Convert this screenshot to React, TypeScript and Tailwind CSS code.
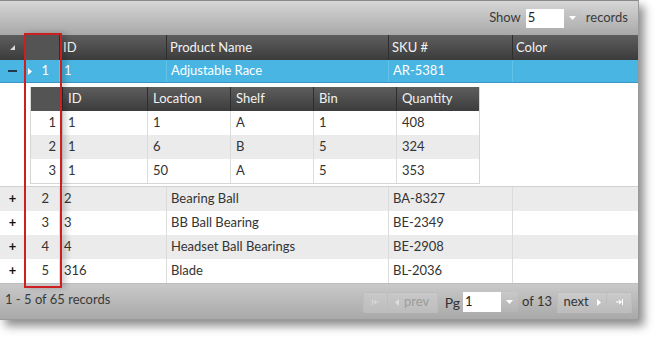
const font = { fontFamily: "Lato, 'Open Sans', sans-serif" };

const mainCols = ["w-[25px]", "w-[35px]", "w-[107px]", "w-[222px]", "w-[124px]", "flex-1"];
const childCols = ["w-[32px]", "w-[85px]", "w-[83px]", "w-[83px]", "w-[83px]", "flex-1"];

const rows = [
  { n: 2, id: "2", name: "Bearing Ball", sku: "BA-8327" },
  { n: 3, id: "3", name: "BB Ball Bearing", sku: "BE-2349" },
  { n: 4, id: "4", name: "Headset Ball Bearings", sku: "BE-2908" },
  { n: 5, id: "316", name: "Blade", sku: "BL-2036" },
];

const childRows = [
  ["1", "1", "1", "A", "1", "408"],
  ["2", "1", "6", "B", "5", "324"],
  ["3", "1", "50", "A", "5", "353"],
];

function Caret({ className = "" }: { className?: string }) {
  return (
    <svg width="7" height="4" viewBox="0 0 7 4" className={className}>
      <path d="M0 0h7L3.5 4z" fill="currentColor" />
    </svg>
  );
}

function Tri({ dir, className = "" }: { dir: "r" | "l"; className?: string }) {
  return (
    <svg width="4" height="7" viewBox="0 0 4 7" className={className}>
      <path d={dir === "r" ? "M0 0l4 3.5L0 7z" : "M4 0L0 3.5 4 7z"} fill="currentColor" />
    </svg>
  );
}

export default function App() {
  return (
    <div className="relative h-[341px] w-[660px] bg-white text-[13px]" style={font}>
      <div className="w-[639px] overflow-hidden border-r border-b border-[#9a9a9a] shadow-[5px_6px_9px_rgba(0,0,0,0.45)]">
        {/* toolbar */}
        <div className="flex h-[35px] items-center justify-end gap-[5px] border-t border-[#8a8a8a] bg-gradient-to-b from-[#d6d6d6] to-[#a9a9a9] pr-[10px] text-[#3a3a3a]">
          <span>Show</span>
          <div className="flex h-[19px] items-stretch">
            <div className="flex w-[38px] items-center bg-white pl-[2px] text-[#222]">5</div>
            <div className="flex w-[17px] items-center justify-center bg-gradient-to-b from-[#c8c8c8] to-[#b4b4b4] text-white">
              <Caret />
            </div>
          </div>
          <span>records</span>
        </div>

        {/* header */}
        <div className="flex h-[25px] bg-gradient-to-b from-[#5e5e5e] to-[#3c3c3c] text-[#f2f2f2]">
          <div className={`${mainCols[0]} flex items-center justify-center`}>
            <svg width="5" height="5" viewBox="0 0 5 5">
              <path d="M5 0v5H0z" fill="#d8d8d8" />
            </svg>
          </div>
          <div className={`${mainCols[1]} border-r border-[#2e2e2e] bg-[#545454]`} />
          {["ID", "Product Name", "SKU #", "Color"].map((h, i) => (
            <div
              key={h}
              className={`${mainCols[i + 2]} flex items-center border-r border-[#2e2e2e] pl-[3px] ${i === 3 ? "border-r-0" : ""}`}
            >
              {h}
            </div>
          ))}
        </div>

        {/* selected row */}
        <div className="flex h-[23px] border-b border-[#3a95c0] bg-[#49b5e2] text-white">
          <div className={`${mainCols[0]} flex items-center justify-center`}>
            <div className="h-[2px] w-[9px] bg-[#1f3a4a]" />
          </div>
          <div className={`${mainCols[1]} flex items-center justify-end gap-[9px] border-r border-[#63c2ea] pr-[10px]`}>
            <Tri dir="r" />
            <span>1</span>
          </div>
          {["1", "Adjustable Race", "AR-5381", ""].map((c, i) => (
            <div key={i} className={`${mainCols[i + 2]} flex items-center border-r border-[#63c2ea] pl-[4px] ${i === 3 ? "border-r-0" : ""}`}>
              {c}
            </div>
          ))}
        </div>

        {/* child grid area */}
        <div className="h-[104px] border-b border-[#d0d0d0] bg-white pt-[4px] pl-[30px]">
          <div className="w-[450px] border-x border-b border-[#d6d6d6]">
            <div className="flex h-[24px] bg-gradient-to-b from-[#5e5e5e] to-[#3c3c3c] text-[#f2f2f2]">
              <div className={`${childCols[0]} border-r border-[#2e2e2e] bg-[#545454]`} />
              {["ID", "Location", "Shelf", "Bin", "Quantity"].map((h, i) => (
                <div key={h} className={`${childCols[i + 1]} flex items-center border-r border-[#2e2e2e] pl-[5px] ${i === 4 ? "border-r-0" : ""}`}>
                  {h}
                </div>
              ))}
            </div>
            {childRows.map((r, ri) => (
              <div key={ri} className={`flex h-[24px] text-[#333] ${ri % 2 ? "bg-[#ebebeb]" : "bg-white"}`}>
                <div className={`${childCols[0]} flex items-center justify-end border-r border-[#dcdcdc] pr-[6px]`}>{r[0]}</div>
                {r.slice(1).map((c, ci) => (
                  <div key={ci} className={`${childCols[ci + 1]} flex items-center border-r border-[#dcdcdc] pl-[5px] ${ci === 4 ? "border-r-0" : ""}`}>
                    {c}
                  </div>
                ))}
              </div>
            ))}
          </div>
        </div>

        {/* body rows */}
        {rows.map((r, ri) => (
          <div key={r.n} className={`flex h-[24px] text-[#333] ${ri % 2 ? "bg-white" : "bg-[#ebebeb]"}`}>
            <div className={`${mainCols[0]} flex items-center justify-center font-bold text-[#111]`}>+</div>
            <div className={`${mainCols[1]} flex items-center justify-end border-r border-[#dcdcdc] pr-[10px]`}>{r.n}</div>
            {[r.id, r.name, r.sku, ""].map((c, i) => (
              <div key={i} className={`${mainCols[i + 2]} flex items-center border-r border-[#dcdcdc] pl-[4px] ${i === 3 ? "border-r-0" : ""}`}>
                {c}
              </div>
            ))}
          </div>
        ))}

        {/* footer */}
        <div className="flex h-[36px] items-center justify-between border-t border-[#bdbdbd] bg-gradient-to-b from-[#c9c9c9] to-[#a9a9a9] pl-[5px] pr-[6px] text-[#3a3a3a]">
          <span className="-mt-[3px]">1 - 5 of 65 records</span>
          <div className="mt-[1px] flex items-center">
            <div className="flex h-[21px] w-[25px] items-center justify-center rounded-l-[2px] border border-[#bdbdbd] bg-gradient-to-b from-[#c8c8c8] to-[#bdbdbd] text-[#d6d6d6]">
              <svg width="7" height="6" viewBox="0 0 7 6"><path d="M0.5 0v6" stroke="currentColor" /><path d="M1 3l3-2.5v5z M3.5 2.6h3.5v0.8H3.5z" fill="currentColor" /></svg>
            </div>
            <div className="flex h-[21px] w-[50px] items-center justify-center gap-[5px] border border-l-0 border-[#bdbdbd] bg-gradient-to-b from-[#c8c8c8] to-[#bdbdbd] text-[#9c9c9c]">
              <Tri dir="l" className="text-[#dedede]" />
              <span>prev</span>
            </div>
            <span className="ml-[7px] mr-[3px] text-[14px] text-[#333]">Pg</span>
            <div className="flex h-[20px] items-stretch">
              <div className="flex w-[38px] items-center bg-white pl-[2px] text-[#222]">1</div>
              <div className="flex w-[17px] items-center justify-center bg-gradient-to-b from-[#c8c8c8] to-[#b4b4b4] text-white">
                <Caret />
              </div>
            </div>
            <span className="ml-[4px] mr-[5px] text-[#333]">of 13</span>
            <div className="flex h-[21px] w-[50px] items-center justify-center gap-[8px] border border-[#bdbdbd] bg-gradient-to-b from-[#cbcbcb] to-[#bcbcbc] text-[#333]">
              <span>next</span>
              <Tri dir="r" className="text-white" />
            </div>
            <div className="flex h-[21px] w-[25px] items-center justify-center rounded-r-[2px] border border-l-0 border-[#bdbdbd] bg-gradient-to-b from-[#cbcbcb] to-[#bcbcbc] text-white">
              <svg width="7" height="6" viewBox="0 0 7 6"><path d="M6.5 0v6" stroke="currentColor" /><path d="M6 3L3 0.5v5z M0 2.6h3.5v0.8H0z" fill="currentColor" /></svg>
            </div>
          </div>
        </div>
      </div>

      {/* red annotation rectangle */}
      <div className="absolute left-[24px] top-[33px] h-[255px] w-[38px] border-2 border-[#cc1f1f] shadow-[4px_0_6px_rgba(0,0,0,0.18)]" />
    </div>
  );
}
